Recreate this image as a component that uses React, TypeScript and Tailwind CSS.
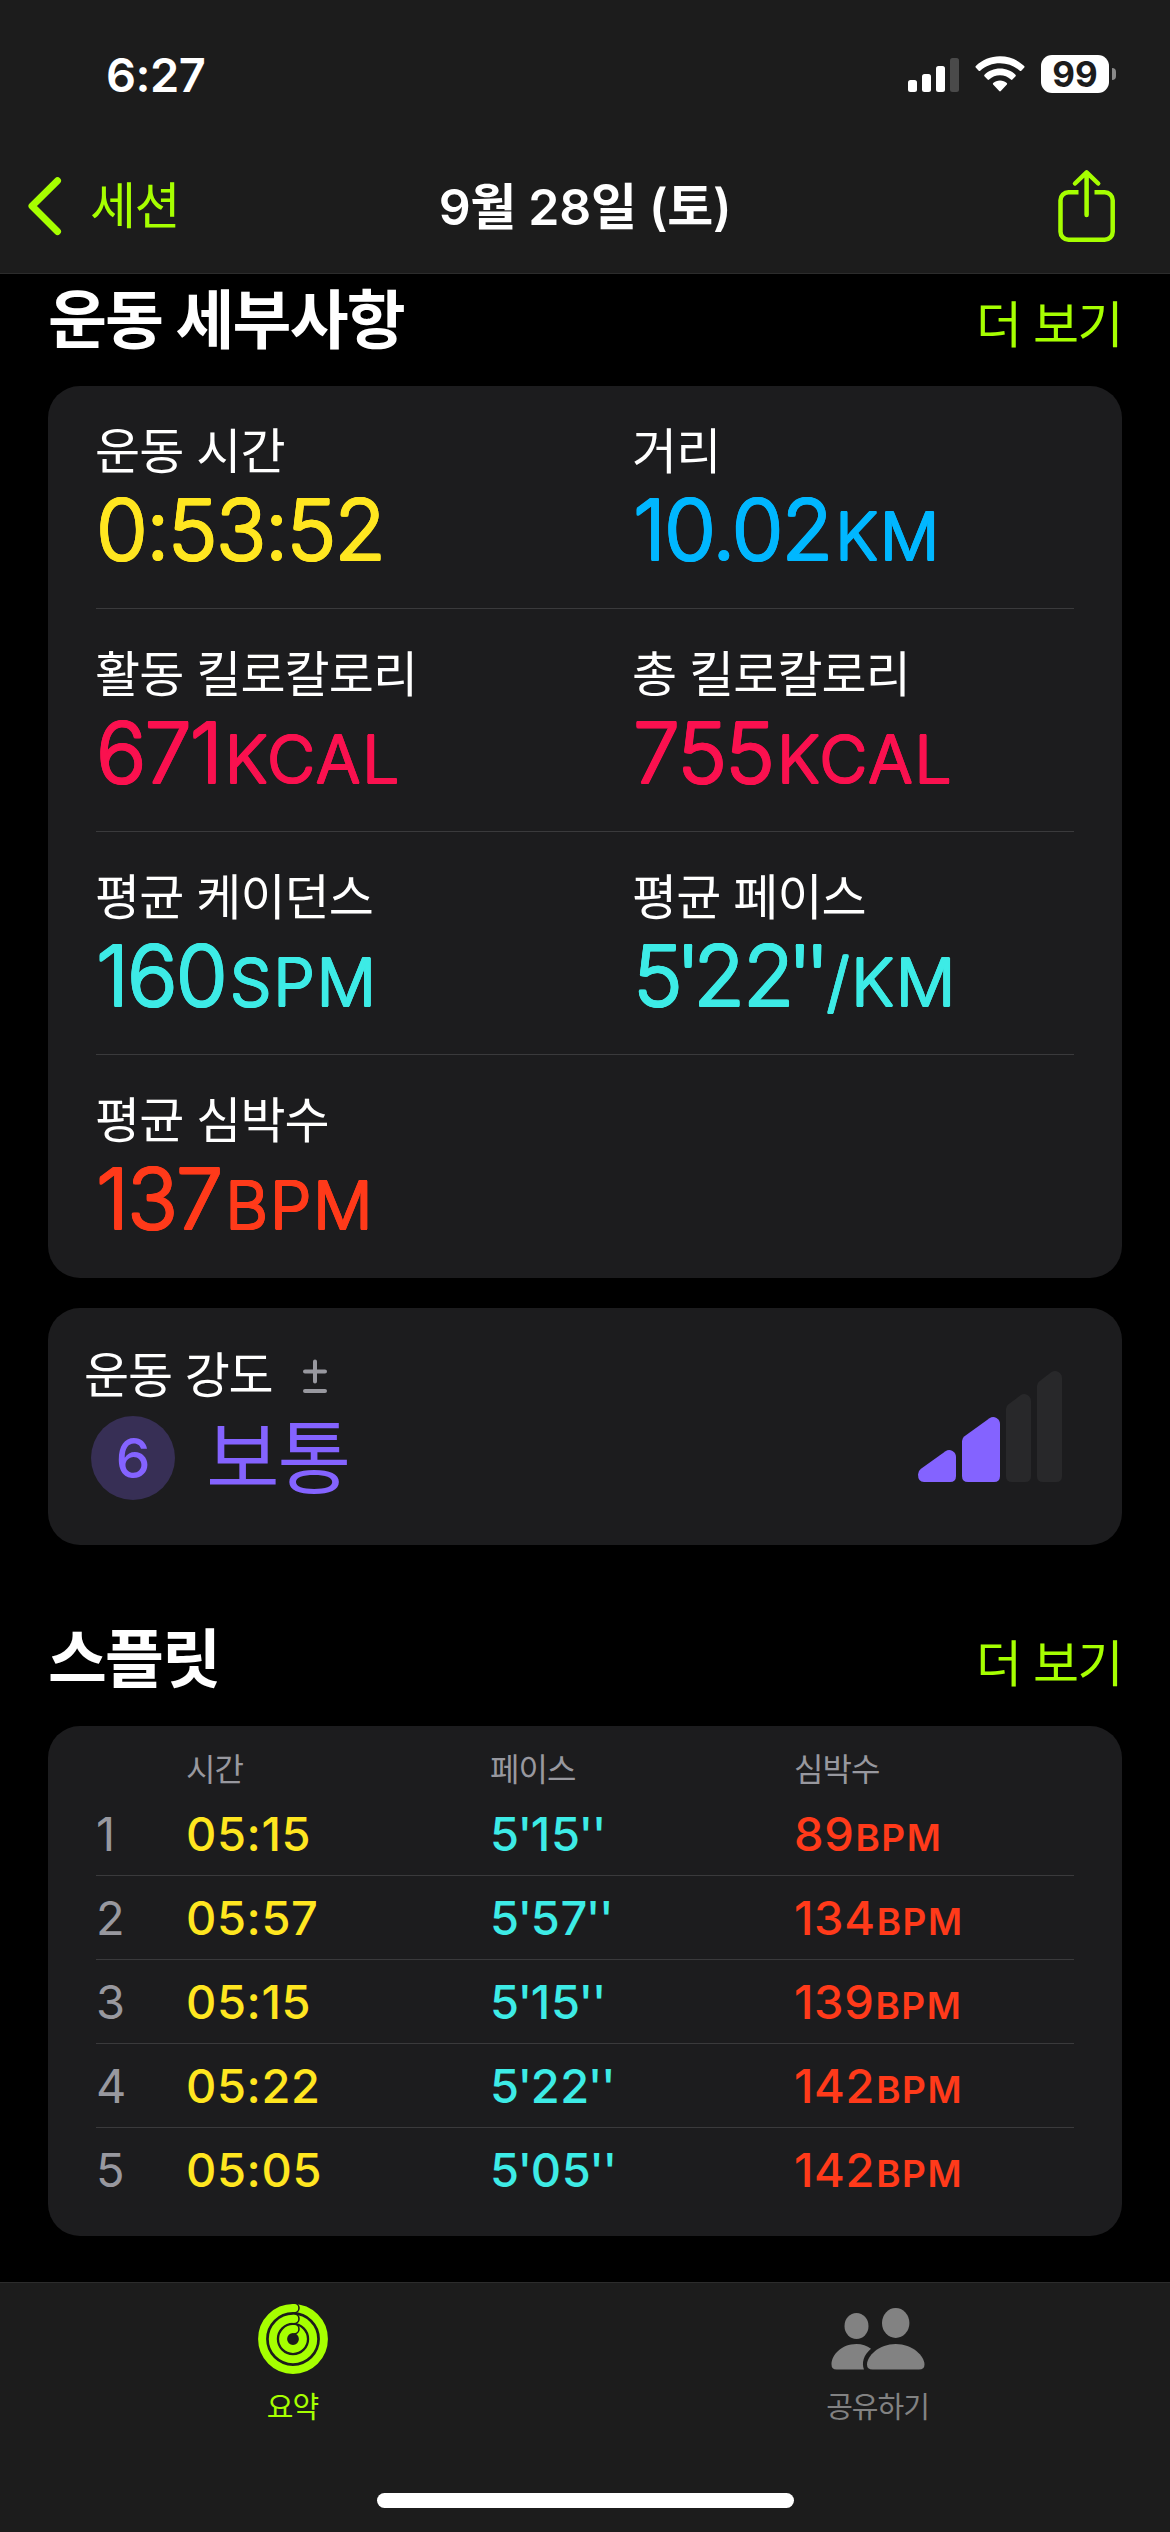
import type { ReactNode } from "react";

const roundedLarge =
  "font-light [text-shadow:1.1px_0_0_currentColor,-1.1px_0_0_currentColor,0_1.1px_0_currentColor,0_-1.1px_0_currentColor,0.8px_0.8px_0_currentColor,-0.8px_0.8px_0_currentColor,0.8px_-0.8px_0_currentColor,-0.8px_-0.8px_0_currentColor]";

function StatusBar() {
  return (
    <div className="flex h-[140px] items-start justify-between pl-[106px] pr-[54px] pt-[55px]">
      <div className="text-[47px] font-semibold leading-[39px] tracking-[-0.5px] text-white">6:27</div>
      <div className="flex h-[38px] items-center">
        <svg width="51" height="34" viewBox="0 0 51 34" className="mt-[2px]" fill="#fff">
          <rect x="0" y="22" width="9" height="12" rx="2.5" />
          <rect x="14" y="16" width="9" height="18" rx="2.5" />
          <rect x="28" y="8" width="9" height="26" rx="2.5" />
          <rect x="42" y="0" width="9" height="34" rx="2.5" fill="#4a4a4a" />
        </svg>
        <svg width="50" height="36" viewBox="0 0 50 36" className="ml-[16px]" fill="#fff">
          <path d="M25 0.3C34.5 0.3 43 4 49.2 10c.5.5.5 1 .1 1.5l-3 3.2c-.5.5-1 .5-1.500 0C39.500 9.800 32.500 7.200 25 7.200S10.500 9.800 5.200 14.700c-.5.5-1 .5-1.500 0l-3-3.200c-.4-.5-.4-1 .1-1.500C7 4 15.500.3 25 .3Z" />
          <path d="M25 12.600c6 0 11.500 2.300 15.500 6.100.5.5.5 1 .1 1.500l-3.200 3.300c-.5.5-1 .5-1.500 0-3-2.700-6.800-4.200-10.900-4.200s-7.900 1.500-10.900 4.200c-.5.5-1 .5-1.500 0l-3.200-3.300c-.4-.5-.4-1 .1-1.500 4-3.800 9.500-6.100 15.500-6.100Z" />
          <path d="M25 24.600c2.700 0 5 .9 6.800 2.500.5.5.5 1 .1 1.500l-6.100 6.500c-.5.6-1.100.6-1.600 0l-6.100-6.500c-.4-.5-.4-1 .1-1.500 1.800-1.600 4.100-2.500 6.800-2.500Z" />
        </svg>
        <div className="ml-[16px] h-[38px] w-[68px] rounded-[11px] bg-white text-center text-[35px] font-bold leading-[38px] text-[#1c1c1c]">
          99
        </div>
        <div className="ml-[3px] h-[12px] w-[4px] rounded-r-full bg-[#8a8a8a]" />
      </div>
    </div>
  );
}

function NavBar() {
  return (
    <div className="grid h-[133px] grid-cols-3 items-start">
      <div className="flex h-[132px] items-center pl-[27px]">
        <svg width="36" height="60" viewBox="0 0 36 60" fill="none" stroke="#a6ff00" strokeWidth="7" strokeLinecap="round" strokeLinejoin="round">
          <path d="M30.500 4.800 5 30l25.500 25.500" />
        </svg>
        <span className="ml-[27px] text-[50px] leading-[60px] tracking-[-1.500px] text-[#a6ff00]">세션</span>
      </div>
      <div className="whitespace-nowrap pt-[36px] text-center text-[50px] font-semibold leading-[62px] tracking-[-0.300px] text-white">
        9월 28일 (토)
      </div>
      <div className="flex justify-end pr-[54px] pt-[29px]">
        <svg width="60" height="74" viewBox="0 0 60 74" fill="none" stroke="#a6ff00" strokeWidth="4.500" strokeLinecap="round" strokeLinejoin="round">
          <path d="M22.500 23.200H12.500a8 8 0 0 0-8 8v31.600a8 8 0 0 0 8 8h36.200a8 8 0 0 0 8-8V31.200a8 8 0 0 0-8-8H38.500" strokeLinecap="butt" />
          <path d="M30.600 4v42M19 14.500 30.600 3.300l11.600 11.200" />
        </svg>
      </div>
    </div>
  );
}

function SectionHeader({ title, className }: { title: string; className: string }) {
  return (
    <div className={`flex items-center justify-between pl-[48px] pr-[48px] ${className}`}>
      <h2 className="text-[64px] font-bold leading-[80px] tracking-[-1.800px] text-white">{title}</h2>
      <span className="mt-[10px] text-[50px] leading-[60px] tracking-[-1.500px] text-[#a6ff00]">더 보기</span>
    </div>
  );
}

/* Sets minute and second marks closer to their digits than the default spacing. */
function Primes({ text, tight }: { text: string; tight: string }) {
  return (
    <>
      {text.split(/(\d?'+)/).map((part, i) =>
        part.includes("'") ? (
          <span key={i} className={tight}>
            {part}
          </span>
        ) : (
          part
        )
      )}
    </>
  );
}

type MetricProps = { label: string; value: string; unit?: string; color: string };

function Metric({ label, value, unit, color }: MetricProps) {
  return (
    <div className="w-[537px] shrink-0 whitespace-nowrap pt-[36px]">
      <div className="-ml-px text-[49px] leading-[60px] tracking-[-0.900px] text-white">{label}</div>
      <div className={`text-[84px] leading-[96px] tracking-[-1.900px] ${roundedLarge} ${color}`}>
        <Primes text={value} tight="tracking-[-7px]" />
        {unit && <span className="ml-[4px] text-[66px] tracking-[1.800px]">{unit}</span>}
      </div>
    </div>
  );
}

function MetricRow({ children, last }: { children: ReactNode; last?: boolean }) {
  return (
    <div className={`flex h-[223px] ${last ? "" : "border-b border-[#3a3a3c]"}`}>{children}</div>
  );
}

function DetailsCard() {
  return (
    <div className="mx-[48px] h-[892px] rounded-[32px] bg-[#1c1c1e] px-[48px]">
      <MetricRow>
        <Metric label="운동 시간" value="0:53:52" color="text-[#ffe620]" />
        <Metric label="거리" value="10.02" unit="KM" color="text-[#00b7ff]" />
      </MetricRow>
      <MetricRow>
        <Metric label="활동 킬로칼로리" value="671" unit="KCAL" color="text-[#fa114f]" />
        <Metric label="총 킬로칼로리" value="755" unit="KCAL" color="text-[#fa114f]" />
      </MetricRow>
      <MetricRow>
        <Metric label="평균 케이던스" value="160" unit="SPM" color="text-[#3debe6]" />
        <Metric label="평균 페이스" value="5'22''" unit="/KM" color="text-[#3debe6]" />
      </MetricRow>
      <MetricRow last>
        <Metric label="평균 심박수" value="137" unit="BPM" color="text-[#ff3a1a]" />
      </MetricRow>
    </div>
  );
}

function EffortCard() {
  return (
    <div className="mx-[48px] mt-[30px] flex h-[237px] justify-between rounded-[32px] bg-[#1c1c1e] pl-[37px] pr-[60px]">
      <div className="pt-[38px]">
        <div className="flex items-center">
          <span className="-ml-px text-[49px] leading-[60px] tracking-[-1.100px] text-white">운동 강도</span>
          <svg width="26" height="36" viewBox="0 0 26 36" className="ml-[29px]" stroke="#98989f" strokeWidth="4" strokeLinecap="round">
            <path d="M13 3.500v20M3 13.500h20M3 33h20" />
          </svg>
        </div>
        <div className="mt-[10px] flex h-[84px] items-center">
          <div className="ml-[6px] flex h-[84px] w-[84px] items-center justify-center rounded-full bg-[#372f55] text-[55px] font-medium leading-[84px] text-[#8463ff]">
            6
          </div>
          <span className="ml-[31px] text-[80px] leading-[84px] tracking-[-2px] text-[#8463ff]">보통</span>
        </div>
      </div>
      <svg width="144" height="111" viewBox="0 0 144 111" className="mt-[63px]">
        <path fill="#8463ff" d="M0 103.500q0-3.500 3-5.700L27.500 80.200Q31 78 34.500 80T38 86v19q0 6-6 6H6q-6 0-6-7.500Z" />
        <path fill="#8463ff" d="M44 70q0-3 2.500-4.800L71.500 47.200Q75 45 78.500 47T82 53v52q0 6-6 6H50q-6 0-6-6Z" />
        <path fill="#28282a" d="M88 38q0-3 2.500-4.800L102.500 24.300Q106 22 109.500 24T113 30v75q0 6-6 6H94q-6 0-6-6Z" />
        <path fill="#28282a" d="M119 15q0-3 2.500-4.800L133.500 1.100Q137-1 140.500 1T144 7v98q0 6-6 6H125q-6 0-6-6Z" />
      </svg>
    </div>
  );
}

const splits = [
  { time: "05:15", pace: "5'15''", bpm: "89" },
  { time: "05:57", pace: "5'57''", bpm: "134" },
  { time: "05:15", pace: "5'15''", bpm: "139" },
  { time: "05:22", pace: "5'22''", bpm: "142" },
  { time: "05:05", pace: "5'05''", bpm: "142" },
];

function SplitsCard() {
  return (
    <div className="mx-[48px] h-[510px] rounded-[32px] bg-[#1c1c1e] px-[48px] pt-[24px]">
      <div className="grid h-[42px] grid-cols-[90px_304px_304px_1fr] text-[32px] leading-[40px] tracking-[-1px] text-[#98989f]">
        <span />
        <span>시간</span>
        <span>페이스</span>
        <span>심박수</span>
      </div>
      {splits.map((s, i) => (
        <div
          key={i}
          className={`grid h-[84px] grid-cols-[90px_304px_304px_1fr] text-[47px] font-medium leading-[84px] tracking-[0.600px] ${
            i < splits.length - 1 ? "border-b border-[#3a3a3c]" : ""
          }`}
        >
          <span className="font-normal text-[#98989f]">{i + 1}</span>
          <span className="text-[#ffe620]">{s.time}</span>
          <span className="text-[#3debe6]">
            <Primes text={s.pace} tight="tracking-[-1.500px]" />
          </span>
          <span className="text-[#ff3a1a]">
            {s.bpm}
            <span className="ml-[1px] text-[37px] font-semibold tracking-[1.500px]">BPM</span>
          </span>
        </div>
      ))}
    </div>
  );
}

function RingsIcon() {
  const rings = [30.9, 20.2, 9.9];
  return (
    <svg width="70" height="70" viewBox="0 0 70 70" fill="none">
      {rings.map((r) => (
        <circle key={r} cx="35" cy="35" r={r} stroke="#a6ff00" strokeWidth="8" />
      ))}
      {rings.map((r) => (
        <g key={r}>
          <path d={`M36.200 ${35 - r - 4.6}a4.600 4.600 0 0 1 0 9.200`} stroke="#1c1c1c" strokeWidth="2" />
          <circle cx="36.200" cy={35 - r} r="4" fill="#a6ff00" />
        </g>
      ))}
    </svg>
  );
}

function PeopleIcon() {
  return (
    <svg width="94" height="64" viewBox="0 0 94 64" fill="#828282">
      <ellipse cx="25.500" cy="19" rx="12" ry="13" />
      <ellipse cx="64.700" cy="16" rx="13.700" ry="15" />
      <path d="M40 41.800C36 38.500 31 37 25.500 37 10.500 37 .500 48 .500 57.500Q.500 62.500 5.500 62.500H33C30.500 56 32.500 48 40 41.800Z" />
      <path d="M64.700 37C48 37 36 49 36 57.500q0 5 5.500 5H88q5.500 0 5.500-5C93.500 49 81.500 37 64.700 37Z" />
    </svg>
  );
}

function TabBar() {
  return (
    <div className="h-[250px] border-t border-[#2c2c2c] bg-[#1c1c1c]">
      <div className="grid h-[210px] grid-cols-2 text-[29px] leading-[36px] tracking-[-1px]">
        <div className="flex flex-col items-center pt-[21px] text-[#a6ff00]">
          <RingsIcon />
          <span className="mt-[16px]">요약</span>
        </div>
        <div className="flex flex-col items-center pt-[24px] text-[#828282]">
          <PeopleIcon />
          <span className="mt-[19px]">공유하기</span>
        </div>
      </div>
      <div className="mx-auto h-[15px] w-[417px] rounded-full bg-white" />
    </div>
  );
}

export default function App() {
  return (
    <div className="flex h-[2532px] w-[1170px] flex-col overflow-hidden bg-black font-['Inter','Noto_Sans_CJK_KR',sans-serif]">
      <header className="h-[274px] shrink-0 border-b border-[#2c2c2c] bg-[#1c1c1c]">
        <StatusBar />
        <NavBar />
      </header>
      <main className="h-[2008px] shrink-0">
        <SectionHeader title="운동 세부사항" className="h-[112px] pb-[20px]" />
        <DetailsCard />
        <EffortCard />
        <SectionHeader title="스플릿" className="h-[181px] pb-[0px] pt-[47px]" />
        <SplitsCard />
      </main>
      <TabBar />
    </div>
  );
}
